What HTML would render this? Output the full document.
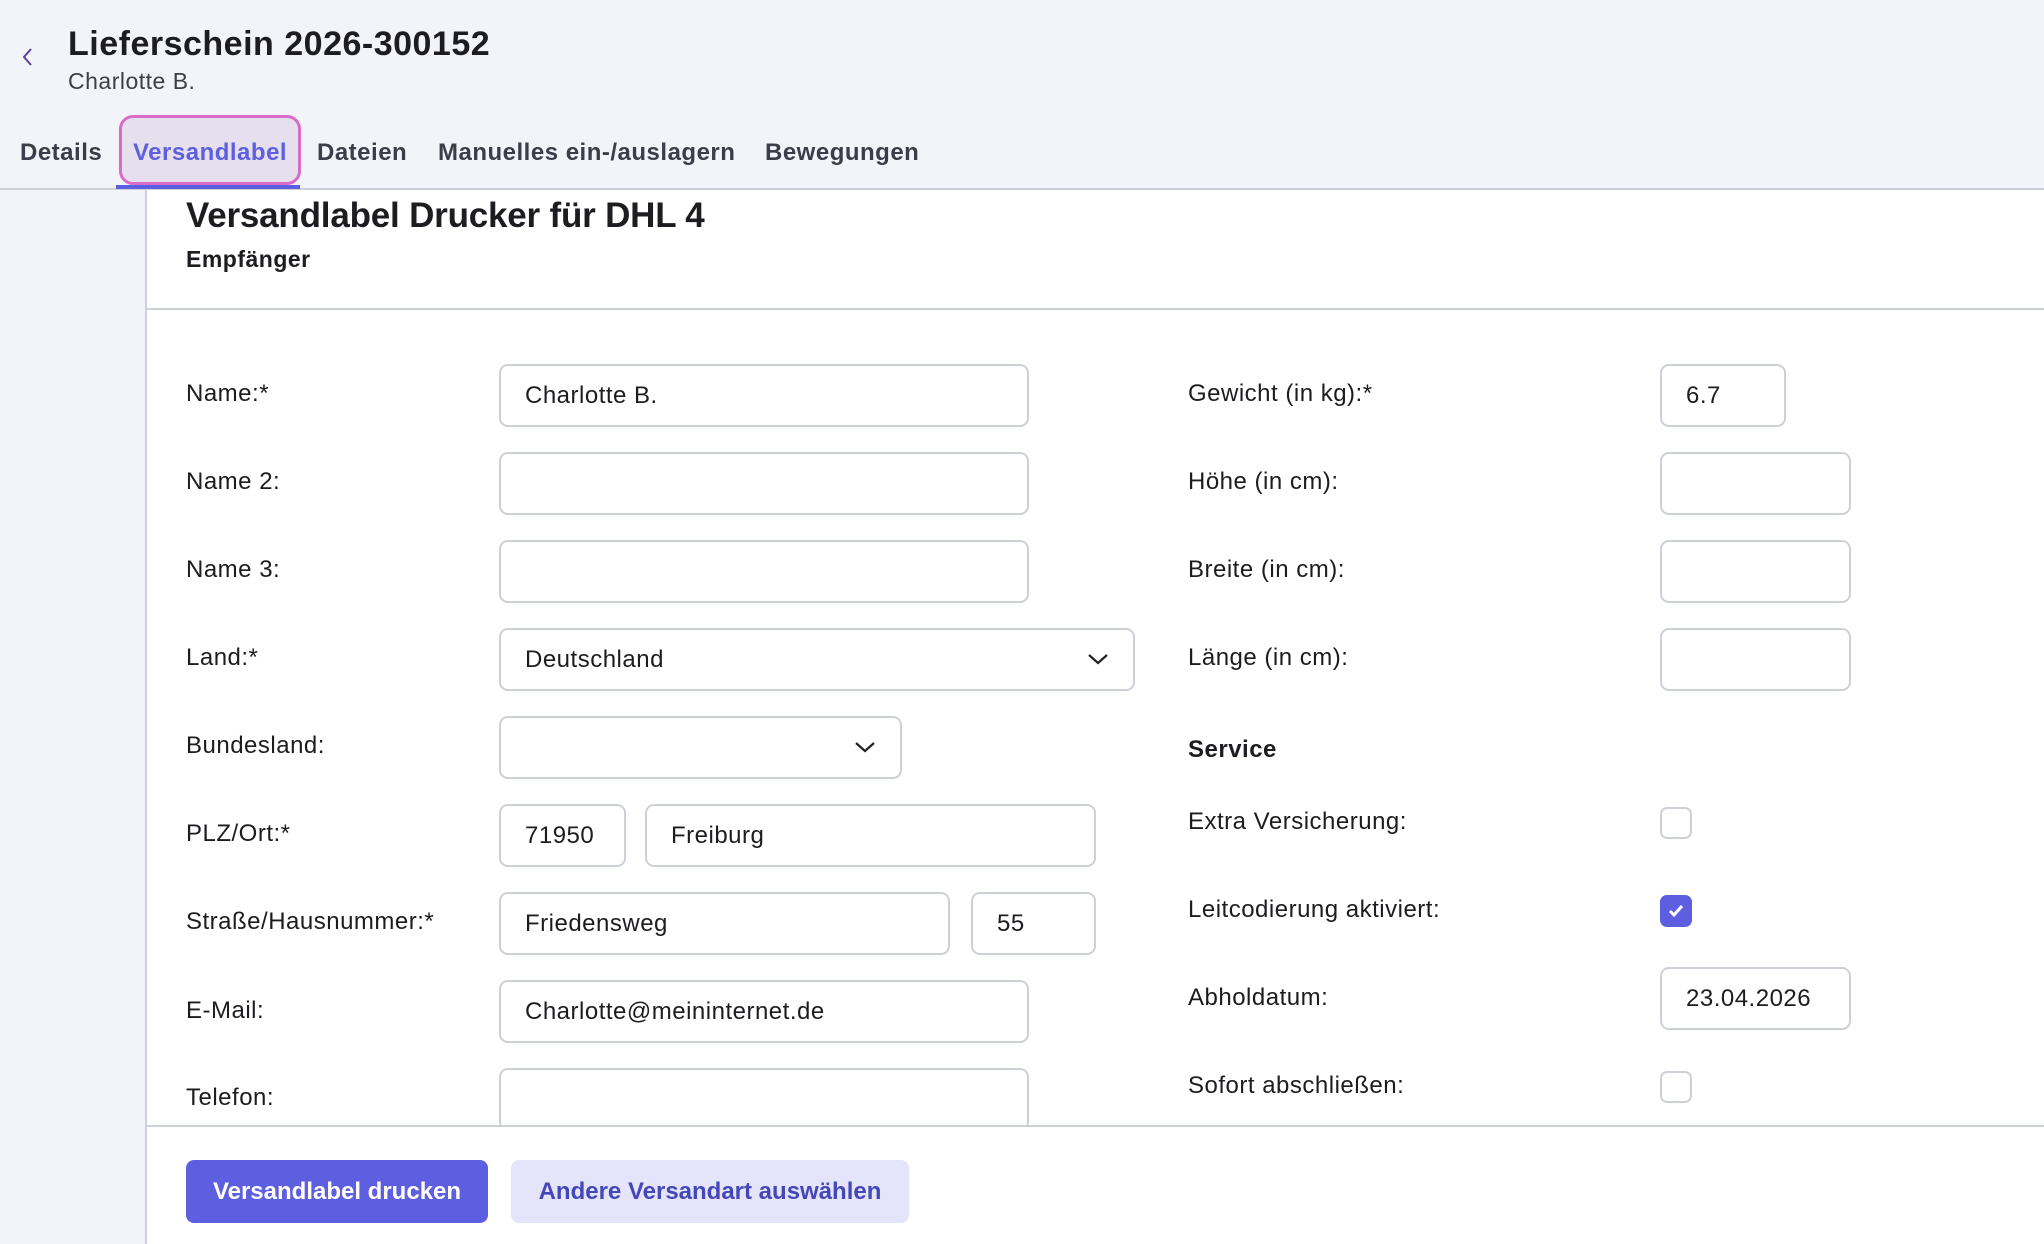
<!DOCTYPE html>
<html><head><meta charset="utf-8"><style>
*{box-sizing:border-box;margin:0;padding:0}
body{width:2044px;height:1244px;overflow:hidden;background:#f3f4f9;font-family:"Liberation Sans",sans-serif;color:#1c1c21;position:relative;letter-spacing:0.5px}
.a{position:absolute}
.lbl{position:absolute;font-size:24px;line-height:30px;transform:translateY(-13px)}
.inp{position:absolute;height:63px;border:2px solid #cdd0d7;border-radius:9px;background:#fff;font-size:24px;line-height:59px;padding-left:24px}
.cb{position:absolute;width:32px;height:32px;border:2px solid #cdd0d7;border-radius:7px;background:#fff}
.tab{position:absolute;top:138px;font-size:24px;font-weight:bold;color:#3b3d4a;line-height:30px}
</style></head><body>
<svg class="a" style="left:20px;top:46px" width="16" height="22" viewBox="0 0 16 22"><path d="M11 3 L4 11 L11 19" fill="none" stroke="#5b3fa8" stroke-width="2"/></svg>
<div class="a" style="left:68px;top:23px;font-size:34px;font-weight:bold;line-height:42px">Lieferschein 2026-300152</div>
<div class="a" style="left:68px;top:67px;font-size:23px;color:#3d3f48;line-height:28px">Charlotte B.</div>
<div class="a" style="left:119px;top:115px;width:182px;height:70px;border:3px solid #d86cc6;border-radius:14px;background:#e6e0ee"></div>
<div class="tab" style="left:20px">Details</div>
<div class="tab" style="left:133px;color:#5d5fe0">Versandlabel</div>
<div class="tab" style="left:317px">Dateien</div>
<div class="tab" style="left:438px">Manuelles ein-/auslagern</div>
<div class="tab" style="left:765px">Bewegungen</div>
<div class="a" style="left:0;top:188px;width:2044px;height:2px;background:#cdd0d7"></div>
<div class="a" style="left:116px;top:185px;width:184px;height:4px;background:#5d5fe0"></div>
<div class="a" style="left:145px;top:190px;width:1899px;height:1054px;background:#fff;border-left:2px solid #cdd0d7"></div>
<div class="a" style="left:186px;top:195px;font-size:35px;font-weight:bold;line-height:42px;letter-spacing:-0.2px">Versandlabel Drucker für DHL 4</div>
<div class="a" style="left:186px;top:245px;font-size:23px;font-weight:bold;line-height:28px">Empfänger</div>
<div class="a" style="left:147px;top:308px;width:1897px;height:2px;background:#cdd0d7"></div>
<div class="a" style="left:147px;top:310px;width:1897px;height:816px;overflow:hidden">
<div style="position:absolute;left:-147px;top:-310px;width:2044px;height:1300px">
<div class="lbl" style="left:186px;top:392px">Name:*</div>
<div class="inp" style="left:499px;top:364px;width:530px">Charlotte B.</div>
<div class="lbl" style="left:186px;top:480px">Name 2:</div>
<div class="inp" style="left:499px;top:452px;width:530px"></div>
<div class="lbl" style="left:186px;top:568px">Name 3:</div>
<div class="inp" style="left:499px;top:540px;width:530px"></div>
<div class="lbl" style="left:186px;top:656px">Land:*</div>
<div class="inp" style="left:499px;top:628px;width:636px">Deutschland<svg style="position:absolute;right:24px;top:22px" width="22" height="14" viewBox="0 0 22 14"><path d="M2 3 L11 11 L20 3" fill="none" stroke="#222" stroke-width="2.2"/></svg></div>
<div class="lbl" style="left:186px;top:744px">Bundesland:</div>
<div class="inp" style="left:499px;top:716px;width:403px"><svg style="position:absolute;right:24px;top:22px" width="22" height="14" viewBox="0 0 22 14"><path d="M2 3 L11 11 L20 3" fill="none" stroke="#222" stroke-width="2.2"/></svg></div>
<div class="lbl" style="left:186px;top:832px">PLZ/Ort:*</div>
<div class="inp" style="left:499px;top:804px;width:127px">71950</div>
<div class="inp" style="left:645px;top:804px;width:451px">Freiburg</div>
<div class="lbl" style="left:186px;top:920px">Straße/Hausnummer:*</div>
<div class="inp" style="left:499px;top:892px;width:451px">Friedensweg</div>
<div class="inp" style="left:971px;top:892px;width:125px">55</div>
<div class="lbl" style="left:186px;top:1009px">E-Mail:</div>
<div class="inp" style="left:499px;top:980px;width:530px">Charlotte@meininternet.de</div>
<div class="lbl" style="left:186px;top:1096px">Telefon:</div>
<div class="inp" style="left:499px;top:1068px;width:530px"></div>

<div class="lbl" style="left:1188px;top:392px">Gewicht (in kg):*</div>
<div class="inp" style="left:1660px;top:364px;width:126px">6.7</div>
<div class="lbl" style="left:1188px;top:480px">Höhe (in cm):</div>
<div class="inp" style="left:1660px;top:452px;width:191px"></div>
<div class="lbl" style="left:1188px;top:568px">Breite (in cm):</div>
<div class="inp" style="left:1660px;top:540px;width:191px"></div>
<div class="lbl" style="left:1188px;top:656px">Länge (in cm):</div>
<div class="inp" style="left:1660px;top:628px;width:191px"></div>
<div class="lbl" style="left:1188px;top:748px;font-weight:bold">Service</div>
<div class="lbl" style="left:1188px;top:820px">Extra Versicherung:</div>
<div class="cb" style="left:1660px;top:807px"></div>
<div class="lbl" style="left:1188px;top:908px">Leitcodierung aktiviert:</div>
<div class="cb" style="left:1660px;top:895px;background:#5d5fe0;border-color:#5d5fe0"><svg width="28" height="28" viewBox="0 0 28 28" style="position:absolute;left:0;top:0"><path d="M8 14 L12 18 L20 9" fill="none" stroke="#fff" stroke-width="3"/></svg></div>
<div class="lbl" style="left:1188px;top:996px">Abholdatum:</div>
<div class="inp" style="left:1660px;top:967px;width:191px">23.04.2026</div>
<div class="lbl" style="left:1188px;top:1084px">Sofort abschließen:</div>
<div class="cb" style="left:1660px;top:1071px"></div>
</div></div>
<div class="a" style="left:147px;top:1125px;width:1897px;height:2px;background:#cdd0d7"></div>
<div class="a" style="left:186px;top:1160px;width:302px;height:63px;border-radius:8px;background:#5d5fe0;color:#fff;font-size:24px;font-weight:bold;line-height:63px;text-align:center;letter-spacing:0">Versandlabel drucken</div>
<div class="a" style="left:511px;top:1160px;width:398px;height:63px;border-radius:8px;background:#e4e5fb;color:#4547b8;font-size:24px;font-weight:bold;line-height:63px;text-align:center;letter-spacing:0">Andere Versandart auswählen</div>
</body></html>
